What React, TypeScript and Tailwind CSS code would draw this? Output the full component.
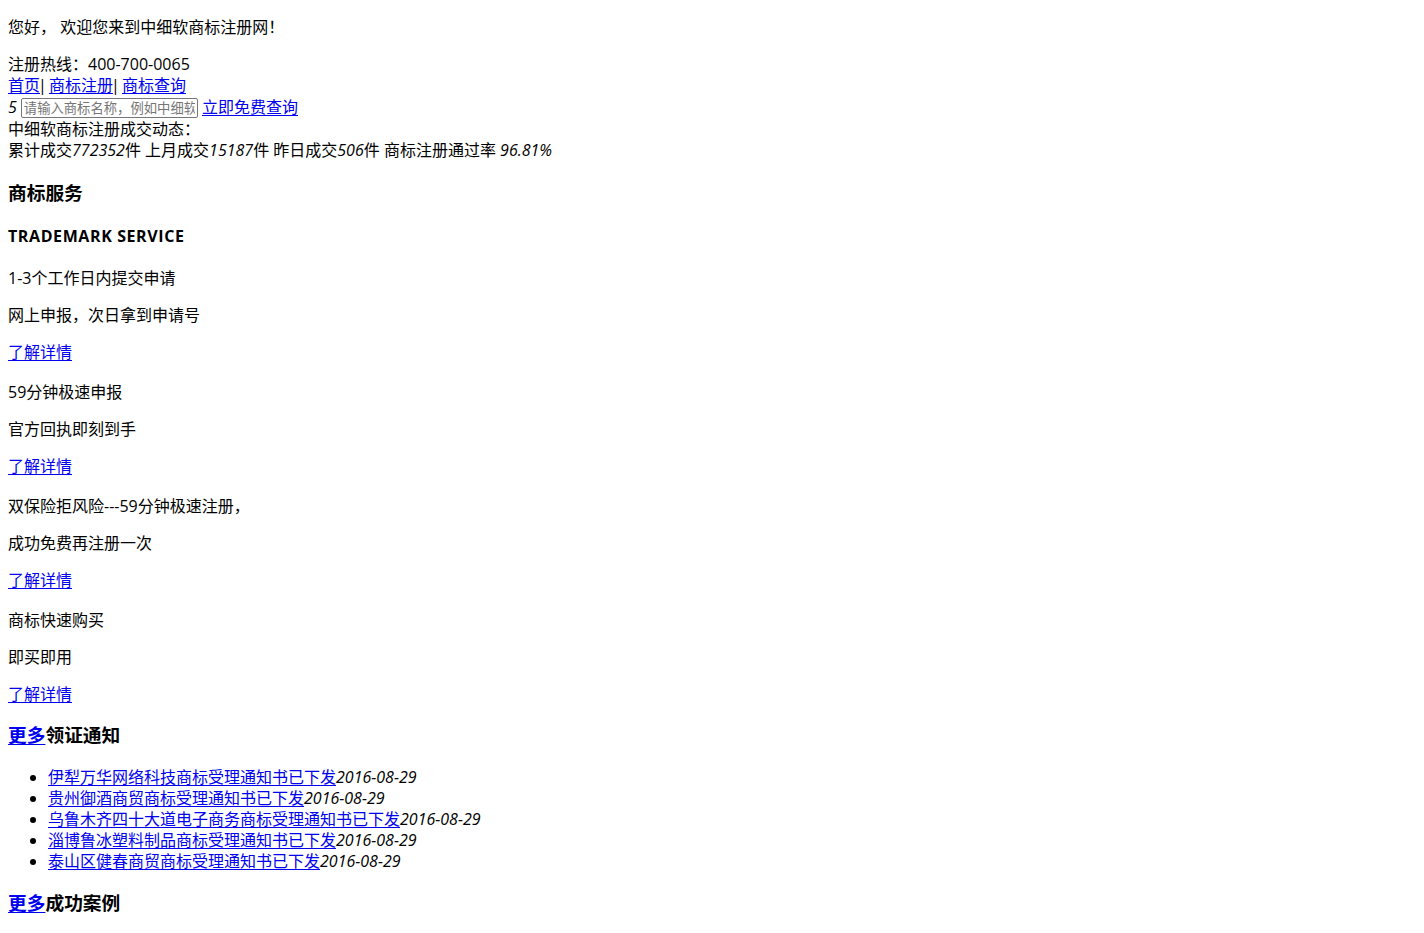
const services = [
  { title: '1-3个工作日内提交申请', desc: '网上申报，次日拿到申请号' },
  { title: '59分钟极速申报', desc: '官方回执即刻到手' },
  { title: '双保险拒风险---59分钟极速注册，', desc: '成功免费再注册一次' },
  { title: '商标快速购买', desc: '即买即用' },
];

const notices = [
  '伊犁万华网络科技商标受理通知书已下发',
  '贵州御酒商贸商标受理通知书已下发',
  '乌鲁木齐四十大道电子商务商标受理通知书已下发',
  '淄博鲁冰塑料制品商标受理通知书已下发',
  '泰山区健春商贸商标受理通知书已下发',
];

const link = 'text-[#0000ee] underline underline-offset-2';

export default function App() {
  return (
    <div className="min-h-[933px] bg-white px-2 pt-px pb-2 font-['Open_Sans','Noto_Sans_CJK_SC',sans-serif] text-[16px] leading-[21px] text-black">
      {/* Top bar */}
      <p className="my-4">您好， 欢迎您来到中细软商标注册网！</p>
      <div>注册热线：400-700-0065</div>
      <div>
        <a href="#" className={link}>首页</a>
        <span className="-mx-[2px]">|</span> <a href="#" className={link}>商标注册</a>
        <span className="-mx-[2px]">|</span> <a href="#" className={link}>商标查询</a>
      </div>
      <div className="flex h-[23px] items-center">
        <i>5</i>
        <input
          type="text"
          placeholder="请输入商标名称，例如中细软"
          className="ml-1 h-[20px] w-[177px] rounded-[2px] border border-[#767676] px-[2px] text-[13.33px] leading-[18px] placeholder:text-[#757575]"
        />
        <span>&nbsp;</span>
        <a href="#" className={link}>立即免费查询</a>
      </div>
      <div>中细软商标注册成交动态：</div>
      <div>
        累计成交<i>772352</i>件 上月成交<i>15187</i>件 昨日成交<i>506</i>件 商标注册通过率 <i>96.81%</i>
      </div>

      {/* Services */}
      <h3 className="mt-[19px] mb-[21px] text-[18.72px] leading-[25px] font-bold">商标服务</h3>
      <h4 className="mb-[21px] font-bold tracking-[0.6px]">TRADEMARK SERVICE</h4>
      {services.map((s, i) => (
        <div key={i} className={i < services.length - 1 ? 'mb-[19px]' : ''}>
          <p className="mb-4">{s.title}</p>
          <p className="mb-4">{s.desc}</p>
          <p>
            <a href="#" className={link}>了解详情</a>
          </p>
        </div>
      ))}

      {/* Notices */}
      <h3 className="mt-[17px] text-[18.72px] leading-[25px] font-bold">
        <a href="#" className={link}>更多</a>领证通知
      </h3>
      <ul className="mt-5 mb-[18px] list-disc pl-10">
        {notices.map((n) => (
          <li key={n}>
            <a href="#" className={link}>{n}</a>
            <i>2016-08-29</i>
          </li>
        ))}
      </ul>

      <h3 className="text-[18.72px] leading-[25px] font-bold">
        <a href="#" className={link}>更多</a>成功案例
      </h3>
    </div>
  );
}
